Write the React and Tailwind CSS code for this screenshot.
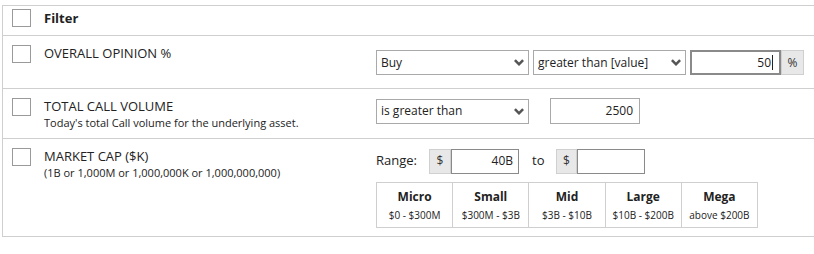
import React from "react";

const Chevron = () => (
  <svg width="10" height="7" viewBox="0 0 10 7" className="shrink-0">
    <path d="M0 2 L1.8 0.2 L5 3.4 L8.2 0.2 L10 2 L5 7 Z" fill="#555" />
  </svg>
);

const Box = () => <div className="w-[19px] h-[18px] border border-[#9a9a9a] bg-white shrink-0" />;

const Select = ({ label, w = "w-[153px]" }) => (
  <div className={`${w} h-[25px] border border-[#a9a9a9] flex items-center justify-between pl-[4px] pr-[4px] text-[12px] text-[#222]`}>
    <span>{label}</span>
    <Chevron />
  </div>
);

const caps = [
  ["Micro", "$0 - $300M"],
  ["Small", "$300M - $3B"],
  ["Mid", "$3B - $10B"],
  ["Large", "$10B - $200B"],
  ["Mega", "above $200B"],
];

export default function App() {
  return (
    <div className="w-[814px] h-[254px] bg-white overflow-hidden pt-[5px] pl-[2px]" style={{ fontFamily: '"Open Sans", "Noto Sans", sans-serif' }}>
      <div className="w-[830px] border-l border-t border-[#cfcfcf] text-[#222]">
        {/* Row 1 */}
        <div className="h-[30px] border-b border-[#cfcfcf] flex items-start pt-[3px]">
          <div className="w-[41px] pl-[9px]"><Box /></div>
          <div className="text-[13px] font-bold leading-[18px]">Filter</div>
        </div>
        {/* Row 2 */}
        <div className="h-[53px] border-b border-[#cfcfcf] flex items-start">
          <div className="w-[41px] pl-[9px] pt-[9px]"><Box /></div>
          <div className="w-[332px] text-[13px] leading-[18px] pt-[8px]">OVERALL OPINION %</div>
          <div className="flex items-center gap-[4px] pt-[14px]">
            <Select label="Buy" />
            <Select label="greater than [value]" />
            <div className="flex">
              <div className="w-[91px] h-[25px] border-2 border-[#8a8a8a] flex items-center justify-end pr-[6px] text-[12px]">
                50<span className="inline-block w-px h-[15px] bg-[#222] ml-[1px]" />
              </div>
              <div className="w-[23px] h-[25px] bg-[#e8e8e8] border border-[#d0d0d0] flex items-center justify-center text-[12px] text-[#333]">%</div>
            </div>
          </div>
        </div>
        {/* Row 3 */}
        <div className="h-[50px] border-b border-[#cfcfcf] flex items-start">
          <div className="w-[41px] pl-[9px] pt-[9px]"><Box /></div>
          <div className="w-[332px] pt-[8px]">
            <div className="text-[13px] leading-[18px]">TOTAL CALL VOLUME</div>
            <div className="text-[11px] leading-[15px]">Today's total Call volume for the underlying asset.</div>
          </div>
          <div className="flex items-center pt-[9px]">
            <Select label="is greater than" />
            <div className="ml-[21px] w-[90px] h-[26px] border border-[#a9a9a9] flex items-center justify-end pr-[6px] text-[12px]">2500</div>
          </div>
        </div>
        {/* Row 4 */}
        <div className="h-[98px] border-b border-[#cfcfcf] flex items-start">
          <div className="w-[41px] pl-[9px] pt-[9px]"><Box /></div>
          <div className="w-[332px] pt-[8px]">
            <div className="text-[13px] leading-[18px]">MARKET CAP ($K)</div>
            <div className="text-[11px] leading-[15px]">(1B or 1,000M or 1,000,000K or 1,000,000,000)</div>
          </div>
          <div className="pt-[9px]">
            <div className="flex items-center h-[26px]">
              <span className="text-[13px] w-[53px]">Range:</span>
              <div className="w-[22px] h-[25px] bg-[#e8e8e8] border border-[#d0d0d0] flex items-center justify-center text-[12px] text-[#333]">$</div>
              <div className="w-[68px] h-[25px] border border-[#8a8a8a] flex items-center justify-end pr-[5px] text-[12px]">40B</div>
              <span className="text-[13px] w-[37px] pl-[13px]">to</span>
              <div className="w-[21px] h-[25px] bg-[#e8e8e8] border border-[#d0d0d0] flex items-center justify-center text-[12px] text-[#333]">$</div>
              <div className="w-[68px] h-[25px] border border-[#8a8a8a]" />
            </div>
            <div className="mt-[8px] flex border border-[#cfcfcf] w-[382px] h-[46px]">
              {caps.map(([t, r], i) => (
                <div key={t} className={`flex-1 flex flex-col items-center justify-center ${i < 4 ? "border-r border-[#cfcfcf]" : ""}`}>
                  <div className="text-[12px] font-bold leading-[17px]">{t}</div>
                  <div className="text-[10px] leading-[16px] mt-[2px]">{r}</div>
                </div>
              ))}
            </div>
          </div>
        </div>
      </div>
    </div>
  );
}
